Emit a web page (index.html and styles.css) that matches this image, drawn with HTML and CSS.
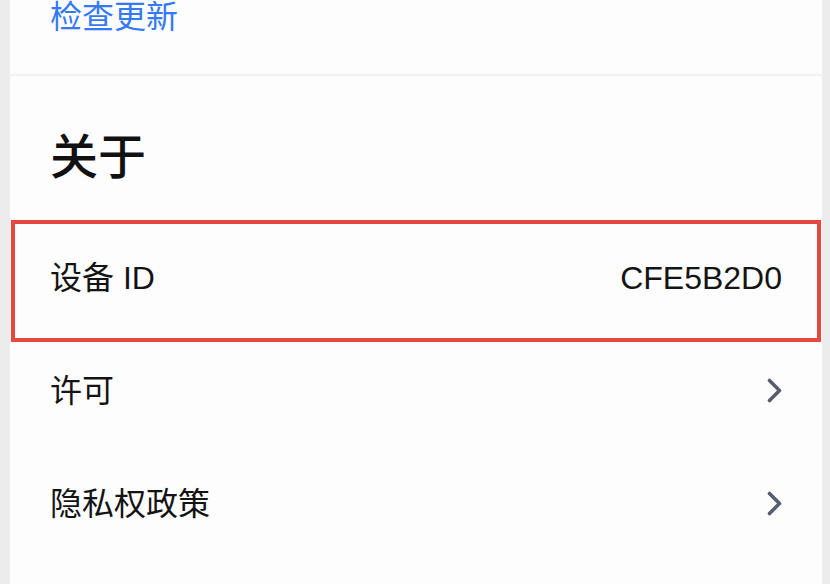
FILE: index.html
```html
<!DOCTYPE html>
<html lang="zh-CN">
<head>
<meta charset="utf-8">
<title>设置</title>
<link rel="stylesheet" href="styles.css">
</head>
<body>
<div class="page">
  <section class="card card-update">
    <a class="update-link">检查更新</a>
  </section>
  <section class="card card-about">
    <h2 class="section-title">关于</h2>
    <div class="row row-highlight">
      <span class="row-label">设备 ID</span>
      <span class="row-value">CFE5B2D0</span>
    </div>
    <div class="row">
      <span class="row-label">许可</span>
      <svg class="chevron" width="15" height="25" viewBox="0 0 15 25"><polyline points="2.5,2.5 12.5,12.5 2.5,22.5" fill="none" stroke="#595c6e" stroke-width="3.6" stroke-linecap="round" stroke-linejoin="round"/></svg>
    </div>
    <div class="row">
      <span class="row-label">隐私权政策</span>
      <svg class="chevron" width="15" height="25" viewBox="0 0 15 25"><polyline points="2.5,2.5 12.5,12.5 2.5,22.5" fill="none" stroke="#595c6e" stroke-width="3.6" stroke-linecap="round" stroke-linejoin="round"/></svg>
    </div>
  </section>
</div>
</body>
</html>
```

FILE: styles.css
```css
html, body {
  margin: 0;
  padding: 0;
}
body {
  background: #ececec;
  font-family: "Liberation Sans", "Noto Sans CJK SC", sans-serif;
  color: #141414;
  height: 584px;
  overflow: hidden;
}
.page {
  height: 584px;
  padding: 0 8px 0 10px;
  display: flex;
  flex-direction: column;
  gap: 2px;
  background: #ececec;
}
.card {
  background: #fdfdfe;
}
.card-update {
  flex: none;
  height: 74px;
  padding: 1px 0 0 40px;
  box-sizing: border-box;
  box-shadow: 0 2px 0 #eff1f4;
}
.update-link {
  display: block;
  font-size: 32px;
  line-height: 32px;
  color: #3479f5;
}
.card-about {
  flex: 1;
  padding-top: 58px;
  overflow: hidden;
}
.section-title {
  margin: 0 0 39px 40px;
  font-size: 48px;
  line-height: 48px;
  font-weight: 500;
  color: #111;
}
.row {
  position: relative;
  height: 113px;
  display: flex;
  align-items: center;
  justify-content: space-between;
  padding: 0 40px;
  font-size: 32px;
  line-height: 32px;
}
.row-highlight::after {
  content: "";
  position: absolute;
  top: -1px;
  bottom: -8px;
  left: 1px;
  right: 1px;
  border: 4px solid #e8473f;
  pointer-events: none;
}
.row-value {
  color: #141414;
}
.chevron {
  display: block;
  flex: none;
}
```
